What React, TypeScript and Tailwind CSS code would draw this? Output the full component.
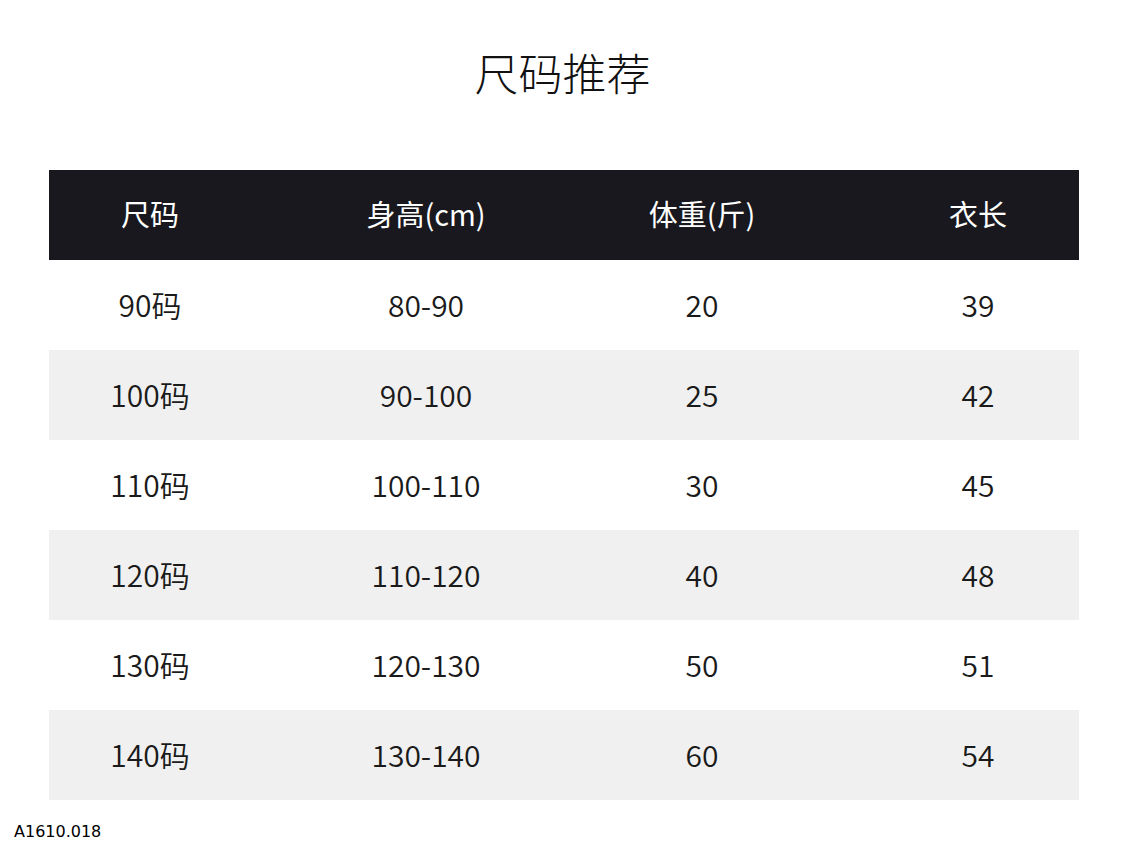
import React from "react";

const rows = [
  ["90码", "80-90", "20", "39"],
  ["100码", "90-100", "25", "42"],
  ["110码", "100-110", "30", "45"],
  ["120码", "110-120", "40", "48"],
  ["130码", "120-130", "50", "51"],
  ["140码", "130-140", "60", "54"],
];

const headers = ["尺码", "身高(cm)", "体重(斤)", "衣长"];

export default function App() {
  return (
    <div
      className="w-[1125px] h-[847px] bg-white overflow-hidden"
      style={{ fontFamily: '"Noto Sans CJK SC", "Noto Sans", sans-serif' }}
    >
      <div className="h-[144px] flex items-center justify-center">
        <h1 className="text-[44px] leading-none text-[#111] font-light">尺码推荐</h1>
      </div>
      <div className="mt-[26px] ml-[49px] w-[1030px]">
        <div className="h-[90px] bg-[#18181e] grid grid-cols-[repeat(4,200px)] gap-x-[76px] pl-px pb-[4px] items-center">
          {headers.map((h) => (
            <div key={h} className="text-center text-white text-[29px] leading-none font-normal">
              {h}
            </div>
          ))}
        </div>
        {rows.map((r, i) => (
          <div
            key={i}
            className={`h-[90px] grid grid-cols-[repeat(4,200px)] gap-x-[76px] pl-px pb-[2px] items-center ${
              i % 2 === 1 ? "bg-[#f0f0f0]" : "bg-white"
            }`}
          >
            {r.map((c, j) => (
              <div key={j} className="text-center text-[#1a1a1a] text-[30px] leading-none font-[350]">
                {c}
              </div>
            ))}
          </div>
        ))}
      </div>
      <div
        className="mt-[22px] pl-[14px] text-[16px] leading-[20px] text-black"
        style={{ fontFamily: '"DejaVu Sans", sans-serif' }}
      >
        A1610.018
      </div>
    </div>
  );
}
